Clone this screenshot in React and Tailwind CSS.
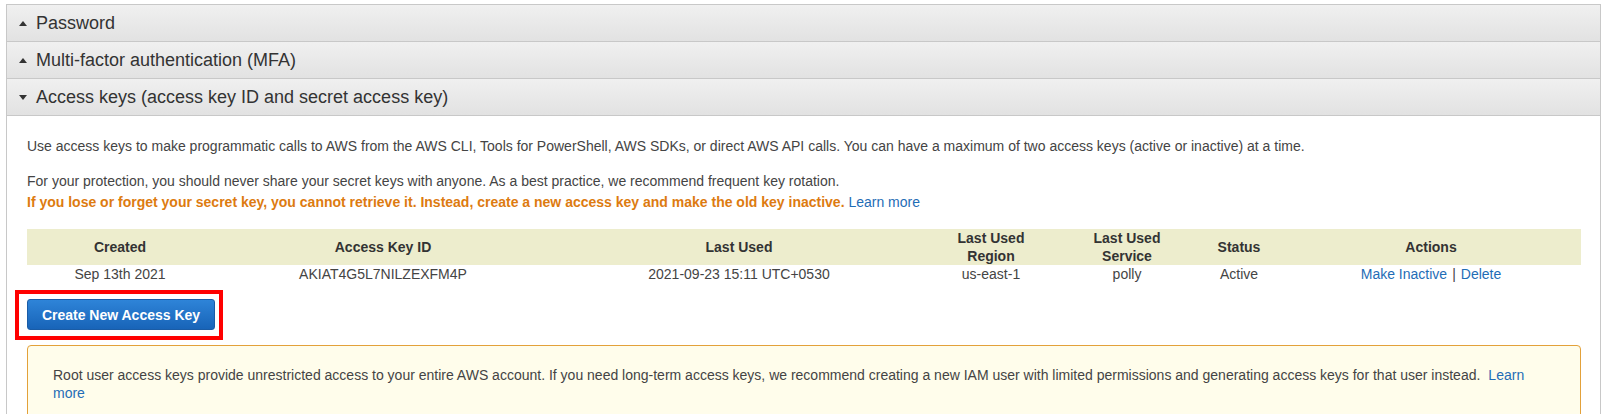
import React from 'react';

const Caret = ({ up }) => (
    <svg width="8" height="5" viewBox="0 0 8 5" className="shrink-0">
        {up ? <polygon points="0,5 8,5 4,0" fill="#333" /> : <polygon points="0,0 8,0 4,5" fill="#333" />}
    </svg>
);

const SectionHeader = ({ title, up }) => (
    <div className="h-[37px] border-b border-[#c8c8c8] bg-gradient-to-b from-[#f0f0f0] to-[#e2e2e2] flex items-center pl-[12px] gap-[9px] text-[18px] text-[#333]">
        <Caret up={up} />
        <span>{title}</span>
    </div>
);

const columns = [
    { label: 'Created' },
    { label: 'Access Key ID' },
    { label: 'Last Used' },
    { label: 'Last Used Region', lines: ['Last Used', 'Region'] },
    { label: 'Last Used Service', lines: ['Last Used', 'Service'] },
    { label: 'Status' },
    { label: 'Actions' },
];

const App = () => {
    return (
        <div className="bg-white h-[414px] overflow-hidden pt-[4px] pl-[6px] pr-[4px] font-['Liberation_Sans',Arial,sans-serif]">
            <div className="border-l border-r border-t border-[#c8c8c8]">
                <SectionHeader title="Password" up />
                <SectionHeader title="Multi-factor authentication (MFA)" up />
                <SectionHeader title="Access keys (access key ID and secret access key)" />

                <div className="bg-white pt-[20px] pl-[20px] pr-[19px] text-[14px] leading-[21px] text-[#444]">
                    <p>
                        Use access keys to make programmatic calls to AWS from the AWS CLI, Tools for PowerShell, AWS SDKs, or direct AWS API calls. You can have a maximum of two access keys (active or inactive) at a time.
                    </p>
                    <p className="mt-[14px]">
                        For your protection, you should never share your secret keys with anyone. As a best practice, we recommend frequent key rotation.
                    </p>
                    <p>
                        <span className="font-bold text-[#dd7b10]">
                            If you lose or forget your secret key, you cannot retrieve it. Instead, create a new access key and make the old key inactive.
                        </span>{' '}
                        <a className="text-[#1f6db6]">Learn more</a>
                    </p>

                    {/* keys table */}
                    <div className="mt-[16px] w-[1554px]">
                        <div className="grid grid-cols-[186px_340px_372px_132px_140px_84px_300px] h-[36px] bg-[#ededcd] items-center text-center font-bold text-[#333] leading-[18px]">
                            {columns.map((col) => (
                                <div key={col.label}>
                                    {col.lines ? (
                                        <>
                                            <div>{col.lines[0]}</div>
                                            <div>{col.lines[1]}</div>
                                        </>
                                    ) : (
                                        col.label
                                    )}
                                </div>
                            ))}
                        </div>
                        <div className="grid grid-cols-[186px_340px_372px_132px_140px_84px_300px] h-[18px] items-center text-center leading-[18px] text-[#444]">
                            <div>Sep 13th 2021</div>
                            <div>AKIAT4G5L7NILZEXFM4P</div>
                            <div>2021-09-23 15:11 UTC+0530</div>
                            <div>us-east-1</div>
                            <div>polly</div>
                            <div>Active</div>
                            <div>
                                <a className="text-[#1f6db6]">Make Inactive</a>
                                <span className="text-[#444] mx-[5px]">|</span>
                                <a className="text-[#1f6db6]">Delete</a>
                            </div>
                        </div>
                    </div>

                    <div className="mt-[7px] -ml-[12px] inline-block border-4 border-[#ff0000] pl-[8px] pr-[4px] pt-[5px] pb-[6px]">
                        <button className="h-[31px] w-[188px] rounded-[3px] border border-[#1a5ca6] bg-gradient-to-b from-[#2e84d8] to-[#1864b8] text-white font-bold text-[14px] leading-none">
                            Create New Access Key
                        </button>
                    </div>

                    <div className="mt-[5px] border border-[#e3a13a] rounded-[4px] bg-[#fffdeb] pt-[20px] pl-[25px] pr-[40px] pb-[20px] leading-[18px] text-[#444]">
                        Root user access keys provide unrestricted access to your entire AWS account. If you need long-term access keys, we recommend creating a new IAM user with limited permissions and generating access keys for that user instead.
                        <a className="text-[#1f6db6] ml-[8px]">Learn more</a>
                    </div>
                </div>
            </div>
        </div>
    );
};

export default App;
